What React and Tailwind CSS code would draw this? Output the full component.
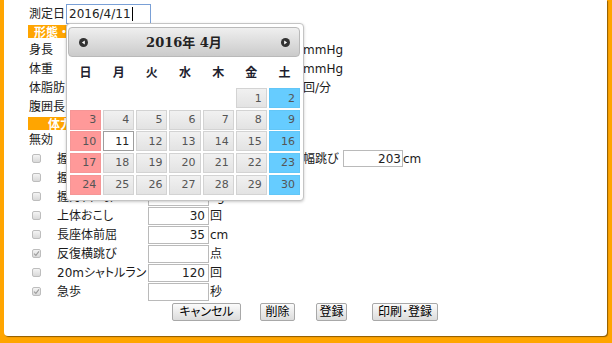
import React from "react";

const FONT = "font-['DejaVu_Sans','Noto_Sans_CJK_JP',sans-serif]";

function Check({ checked }) {
  return (
    <span className="w-[9px] h-[9px] rounded-[2px] border border-[#bdbdbd] bg-gradient-to-b from-[#f4f4f4] to-[#d9d9d9] flex items-center justify-center">
      {checked && (
        <svg width="7" height="7" viewBox="0 0 7 7">
          <path d="M1 3.6 L2.9 5.4 L6 1.4" stroke="#9c9c9c" strokeWidth="1.1" fill="none" />
        </svg>
      )}
    </span>
  );
}

function Btn({ className, children }) {
  return (
    <div
      className={
        "h-[18px] border border-[#a8a8a8] rounded-[2px] bg-gradient-to-b from-[#fbfbfb] to-[#dcdcdc] flex items-center justify-center text-[12px] leading-none text-black " +
        className
      }
    >
      {children}
    </div>
  );
}

function NavIcon({ dir }) {
  return (
    <svg width="9" height="9" viewBox="0 0 9 9">
      <circle cx="4.5" cy="4.5" r="4.5" fill="#333" />
      {dir === "prev" ? (
        <polygon points="5.8,2.4 5.8,6.6 2.9,4.5" fill="#fff" />
      ) : (
        <polygon points="3.2,2.4 3.2,6.6 6.1,4.5" fill="#fff" />
      )}
    </svg>
  );
}

const upperRows = [
  { label: "身長", unit: "cm", rlabel: "最高血圧", runit: "mmHg" },
  { label: "体重", unit: "kg", rlabel: "最低血圧", runit: "mmHg" },
  { label: "体脂肪", unit: "%", rlabel: "脈拍", runit: "回/分" },
  { label: "腹囲長", unit: "cm", rlabel: "", runit: "" },
];

const lowerRows = [
  { c: false, label: "握力(右)", v: "", unit: "kg", right: true },
  { c: false, label: "握力(左)", v: "", unit: "kg" },
  { c: false, label: "握力(平均)", v: "", unit: "kg" },
  { c: false, label: "上体おこし", v: "30", unit: "回" },
  { c: false, label: "長座体前屈", v: "35", unit: "cm" },
  { c: true, label: "反復横跳び", v: "", unit: "点" },
  { c: false, label: "20mシャトルラン", v: "120", unit: "回" },
  { c: true, label: "急歩", v: "", unit: "秒" },
];

function Calendar() {
  const cells = [];
  for (let i = 0; i < 5; i++) cells.push(null);
  for (let d = 1; d <= 30; d++) cells.push(d);
  const dows = ["日", "月", "火", "水", "木", "金", "土"];
  return (
    <div className="absolute left-[62px] top-[23px] w-[238px] h-[178px] bg-white border border-[#c4c4c4] rounded-[4px] shadow-[0_1px_3px_rgba(0,0,0,0.22)] pt-[3px]">
      <div className="relative ml-[1px] w-[232px] h-[30px] border border-[#b9b9b9] rounded-[4px] bg-gradient-to-b from-[#efefef] to-[#cbcbcb] flex items-center justify-center">
        <span className="absolute left-[10px] top-[10px] flex">
          <NavIcon dir="prev" />
        </span>
        <span className="font-['DejaVu_Serif','Noto_Sans_CJK_JP',serif] font-bold text-[13px] text-[#222] leading-none">
          2016年 4月
        </span>
        <span className="absolute right-[9px] top-[10px] flex">
          <NavIcon dir="next" />
        </span>
      </div>
      <div className="ml-[3px] w-[230px] h-[31px] grid grid-cols-7 gap-x-[2px] items-center">
        {dows.map((d) => (
          <div key={d} className="text-center font-bold text-[12px] text-[#1f1f2f] leading-none">
            {d}
          </div>
        ))}
      </div>
      <div className="ml-[3px] w-[230px] grid grid-cols-7 gap-x-[2px] gap-y-[1.67px] auto-rows-[20px]">
        {cells.map((d, i) => {
          if (d === null) return <div key={i} />;
          const col = i % 7;
          let cls =
            "border border-[#d3d3d3] bg-gradient-to-b from-[#f1f1f1] to-[#e3e3e3] text-[#555]";
          if (col === 0) cls = "border border-[#f59696] bg-[#ff9999] text-[#555]";
          if (col === 6) cls = "border border-[#62c6f7] bg-[#66ccff] text-[#555]";
          if (d === 11) cls = "border border-[#9e9e9e] bg-white text-[#222]";
          return (
            <div
              key={i}
              className={
                "flex items-center justify-end pr-[4px] text-[11px] leading-none " + cls
              }
            >
              {d}
            </div>
          );
        })}
      </div>
    </div>
  );
}

export default function App() {
  return (
    <div className={"w-[612px] h-[343px] bg-[#ffa500] pl-[4px] pr-[5px] pb-[7px] flex " + FONT}>
      <div className="relative flex-1 bg-white rounded-b-[4px] shadow-[1px_1px_1px_rgba(0,0,0,0.45)] pl-[24px] pt-[4px] text-[12px] text-[#1a1a1a]">
        {/* 測定日 */}
        <div className="flex items-center h-[20px]">
          <span className="pl-[1px] w-[38px]">測定日</span>
          <div className="w-[85px] h-[20px] border border-[#7aa0d6] flex items-center pl-[2px] text-[12px] text-[#222]">
            2016/4/11
            <span className="ml-[1px] w-[1px] h-[14px] bg-black" />
          </div>
        </div>

        {/* header 1 */}
        <div className="mt-[1px] w-[108px] h-[13px] bg-[#ffa500] text-white font-bold text-center text-[12px] leading-[13px] font-['Noto_Sans_CJK_JP',sans-serif]">
          形態・血圧・脈拍
        </div>

        <div className="mt-[2px]">
          {upperRows.map((r) => (
            <div key={r.label} className="flex items-center h-[19px]">
              <span className="w-[60px] pl-[1px]">{r.label}</span>
              <div className="w-[50px] h-[17px] border border-[#b9b9b9]" />
              <span className="w-[24px] pl-[1px]">{r.unit}</span>
              <span className="w-[80px]">{r.rlabel}</span>
              {r.rlabel ? (
                <div className="w-[60px] h-[17px] border border-[#b9b9b9]" />
              ) : (
                <div className="w-[60px]" />
              )}
              <span className="pl-[1px]">{r.runit}</span>
            </div>
          ))}
        </div>

        {/* header 2 */}
        <div className="mt-[1px] w-[100px] h-[13px] bg-[#ffa500] text-white font-bold text-center text-[12px] leading-[13px] font-['Noto_Sans_CJK_JP',sans-serif]">
          体力テスト
        </div>

        <div className="flex items-center h-[19px]">
          <span className="pl-[1px]">無効</span>
        </div>

        {lowerRows.map((r) => (
          <div key={r.label} className="flex items-center h-[19px]">
            <span className="w-[4px]" />
            <Check checked={r.c} />
            <span className="w-[16px]" />
            <span className="w-[91px] whitespace-nowrap [font-feature-settings:'palt']">{r.label}</span>
            <div className="w-[61px] h-[18px] border border-[#bababa] flex items-center justify-end pr-[3px] text-[#222]">
              {r.v}
            </div>
            <span className={r.right ? "w-[70px] pl-[1px]" : "pl-[1px]"}>{r.unit}</span>
            {r.right && (
              <>
                <span className="w-[64px] whitespace-nowrap">立ち幅跳び</span>
                <div className="w-[60px] h-[17px] border border-[#bababa] flex items-center justify-end pr-[1px] text-[#222]">
                  203
                </div>
                <span>cm</span>
              </>
            )}
          </div>
        ))}

        {/* buttons */}
        <div className="flex mt-[2px]">
          <Btn className="ml-[144px] w-[69px] [font-feature-settings:'palt']">キャンセル</Btn>
          <Btn className="ml-[19px] w-[35px]">削除</Btn>
          <Btn className="ml-[21px] w-[31px]">登録</Btn>
          <Btn className="ml-[25px] w-[66px]">印刷･登録</Btn>
        </div>

        <Calendar />
      </div>
    </div>
  );
}
